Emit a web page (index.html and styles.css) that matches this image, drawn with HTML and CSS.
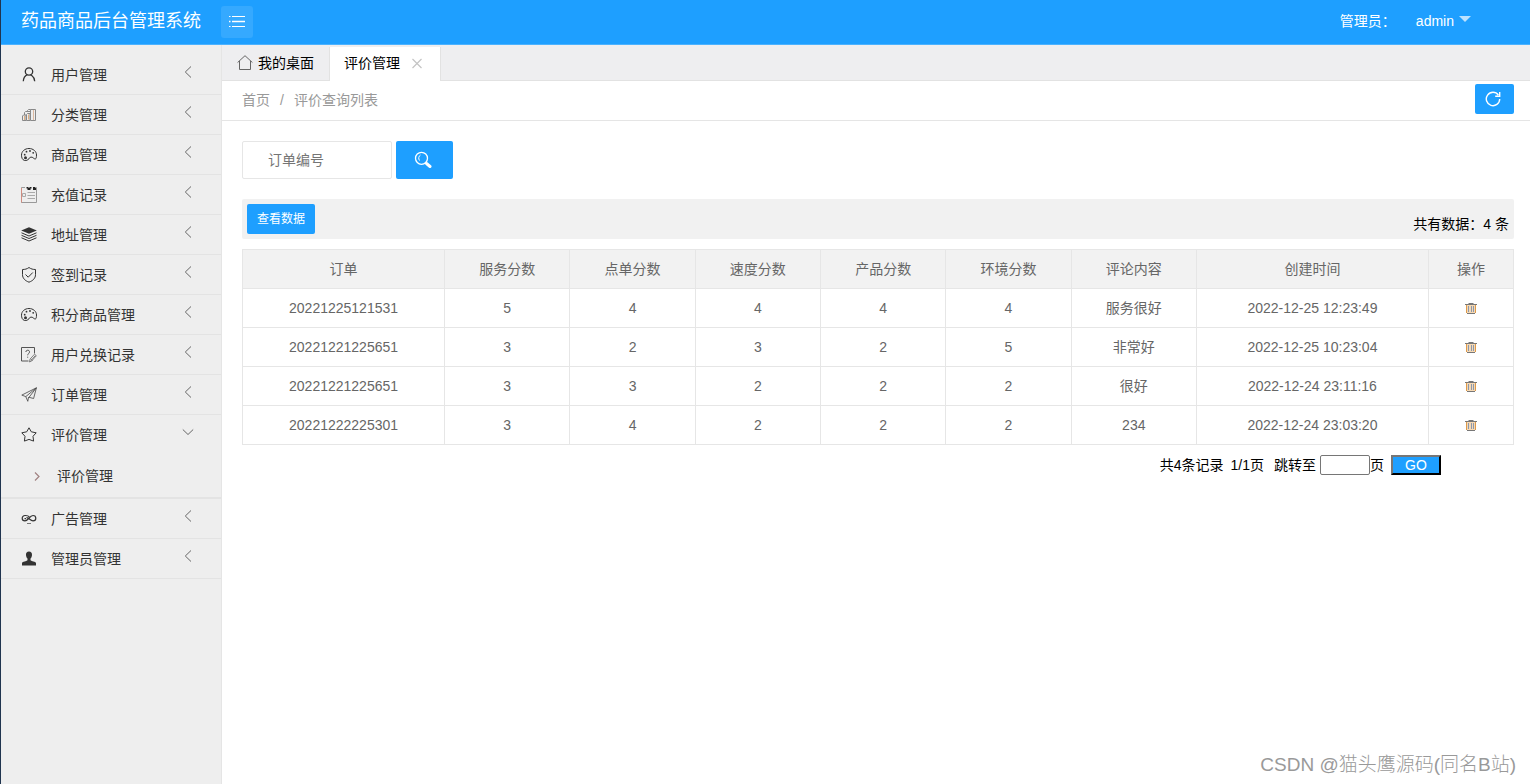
FILE: index.html
```html
<!DOCTYPE html>
<html lang="zh-CN">
<head>
<meta charset="utf-8">
<title>药品商品后台管理系统</title>
<link rel="stylesheet" href="styles.css">
</head>
<body>
<svg class="sprite" aria-hidden="true">
  <symbol id="user" viewBox="0 0 16 16"><g stroke-width="1.3"><circle cx="8" cy="4.500" r="3.700"/><path d="M6.300 7.700C4 8.800 2.500 11 2.300 14.200M9.500 7.700l1.500 1C12.800 10 13.600 11.800 13.700 14.200"/></g></symbol>
  <symbol id="chart" viewBox="0 0 16 16"><path d="M1.500 13.500V9l1-1H5v5.500zM5.500 13.500v-6l1-1H9v7zM9.500 13.500v-11h5v11zM3.500 8V5.500l1-1h5M6.500 4.500v-1l1-1h2" stroke="#888"/><path d="M7.500 7.500v5M3.500 9v4" stroke="#e0b083"/><path d="M12.500 3v10" stroke="#dcb9a0"/></symbol>
  <symbol id="palette" viewBox="0 0 16 16"><path d="M3.300 13.400C1.300 12.700.5 10.500.5 8.200.5 4.200 3.900 1.500 8 1.500s7.500 2.800 7.500 6.500c0 2.200-.3 3.800-1.200 4-1.500.2-2.400-2.300-4.400-1.900-2.500.5-1.900 3.300-4.800 3.400-.7 0-1.200.1-1.800-.1z"/><g fill="#333" stroke="none"><circle cx="3.700" cy="7.700" r=".9"/><circle cx="5.500" cy="4.700" r=".9"/><circle cx="9" cy="4" r=".9"/><circle cx="12.200" cy="5.800" r=".9"/><circle cx="4.500" cy="10.800" r="1.500"/></g></symbol>
  <symbol id="note" viewBox="0 0 16 16"><path d="M4 .5H.5v15h15V.5H14" stroke="#999"/><path d="M.5 1v14.500" stroke="#d08c80"/><path d="M6.500 5.500h7.500M6.500 8.500h7.500M6.500 11.500h7.500M1.500 6.500h3v3h-3z" stroke="#aaa"/><path d="M5.500 .5h2M8.500 .5h2M12 .5h2M6.500 2h3M12 2h3" stroke="#222" stroke-width="1.800"/></symbol>
  <symbol id="layers" viewBox="0 0 16 16"><path d="M8 .3l7.800 3.200L8 6.800.2 3.500z" fill="#333" stroke="none"/><path d="M.5 5.800L8 9l7.500-3.200M.5 8.300L8 11.500l7.500-3.200M.5 10.800L8 14l7.500-3.200"/></symbol>
  <symbol id="shield" viewBox="0 0 16 16"><path d="M8 .5c2 1.500 4 2 6.500 2v5.200c0 3.500-2.500 6-6.500 7.500-4-1.500-6.500-4-6.500-7.500V2.500C4 2.500 6 2 8 .5zM4.500 7.500l2.700 2.700L11.800 5.500"/></symbol>
  <symbol id="form" viewBox="0 0 16 16"><path d="M13.500 6.500V.5H.5v13.500h7M4.800 5c.2-2.500 4-2.300 3.700 0C8.400 6.500 6.800 6.500 6.700 8.300M6.700 9.700v1" stroke="#555"/><path d="M8.500 15l.5-2.800 4.500-5 1.800 1.500-4.500 5.200zM10 13.500l4.200-4.800M9.500 12l2 1.500" stroke="#666" stroke-width=".8"/></symbol>
  <symbol id="plane" viewBox="0 0 16 16"><path d="M15.400.8L.8 8.100l4 1.500L15.400.8 12.600 11.500l-4.600-1.200L15.400.8M4.800 9.600l2 4.700.8-4.300" stroke="#444" stroke-width=".8"/></symbol>
  <symbol id="star" viewBox="0 0 16 16"><path d="M8 .8l2.300 4 4.900 1-3.200 3.500.6 4.800L8 12.400l-4.600 1.700.6-4.800L.8 5.800l4.900-1z"/></symbol>
  <symbol id="loop" viewBox="0 0 16 16"><path d="M8.300 5.800C7 4.300 5.300 4.500 4 4.500 2.300 4.500 1.200 5.700 1.200 7.300S2.400 9.900 4 9.900c3.300 0 4.500-5.400 8-5.400 1.700 0 2.800 1.200 2.800 2.800S13.600 9.900 12 9.900c-2.800 0-3.800-3.400-6.500-3.200M3.500 7.600h1.500" stroke-width="1.200"/><path d="M6 12.500h4" stroke="#777"/></symbol>
  <symbol id="admin" viewBox="0 0 16 16"><path d="M8 .5c2 0 3.200 1.300 3 3.500-.1 1.500-.6 2.800-1.500 3.600v1.600c1 1 5 1.200 5.500 2.800v2.500H1V12c.5-1.600 4.500-1.800 5.500-2.800V7.600C5.600 6.800 5.100 5.500 5 4 4.800 1.800 6 .5 8 .5z" fill="#333" stroke="none"/></symbol>
  <symbol id="left" viewBox="0 0 16 16"><path d="M11 2.500L5.300 8l5.700 5.500"/></symbol>
  <symbol id="down" viewBox="0 0 16 16"><path d="M2.800 4.500l5.200 5L13.200 4.500"/></symbol>
  <symbol id="right" viewBox="0 0 16 16"><path d="M6 4.500l4 4-4 4" stroke-width="1.200"/></symbol>
  <symbol id="home" viewBox="0 0 16 16"><path d="M.6 7.500L8 .7l7.400 6.800M2.500 6v8.500h11V6"/></symbol>
  <symbol id="close" viewBox="0 0 14 14"><path d="M2.500 3l9 9M11.500 3l-9 9" stroke-width="1.200"/></symbol>
  <symbol id="refresh" viewBox="0 0 16 16"><path d="M13.400 4A6.700 6.700 0 1 0 14.700 8M14.700 1v4.300h-4.500" stroke-width="1.400"/></symbol>
  <symbol id="search" viewBox="0 0 18 18"><circle cx="7.500" cy="7.300" r="6" stroke-width="1.300"/><path d="M6.500 4c-2 1.200-2.300 3.700-1 5.500"/><path d="M12.500 12.500l3.500 3" stroke-width="3" stroke-linecap="round"/></symbol>
  <symbol id="list" viewBox="0 0 18 16"><path d="M4 2.500h13M1 2.500h1.500M1 12.500h1.500M4 12.500h13"/><path d="M4 7.500h13M1 7.500h1.500" stroke-width="1.600"/></symbol>
  <symbol id="trash" viewBox="0 0 14 14"><path d="M2 4h10v8H2z" fill="#f6d9b4" stroke="none"/><path d="M1 3.500h12M4.500 2.500h5M3 12.500h8" stroke="#777"/><path d="M2.500 4v8M11.500 4v8" stroke="#dc9a4c"/><path d="M4.500 5v6M7.500 5v6M9.500 5v6" stroke="#8c98ac"/></symbol>
</svg>
<div class="app">
  <header class="header">
    <a class="brand" href="#">药品商品后台管理系统</a>
    <button class="toggle" type="button" aria-label="折叠菜单"><svg class="icon-list"><use href="#list"/></svg></button>
    <div class="account"><span>管理员：</span><a class="account-name" href="#">admin<i class="caret"></i></a></div>
  </header>
  <div class="body">
    <nav class="sidebar">
      <a class="item" href="#"><svg class="icon"><use href="#user"/></svg><span>用户管理</span><svg class="icon arrow"><use href="#left"/></svg></a>
      <a class="item" href="#"><svg class="icon"><use href="#chart"/></svg><span>分类管理</span><svg class="icon arrow"><use href="#left"/></svg></a>
      <a class="item" href="#"><svg class="icon"><use href="#palette"/></svg><span>商品管理</span><svg class="icon arrow"><use href="#left"/></svg></a>
      <a class="item" href="#"><svg class="icon"><use href="#note"/></svg><span>充值记录</span><svg class="icon arrow"><use href="#left"/></svg></a>
      <a class="item" href="#"><svg class="icon"><use href="#layers"/></svg><span>地址管理</span><svg class="icon arrow"><use href="#left"/></svg></a>
      <a class="item" href="#"><svg class="icon"><use href="#shield"/></svg><span>签到记录</span><svg class="icon arrow"><use href="#left"/></svg></a>
      <a class="item" href="#"><svg class="icon"><use href="#palette"/></svg><span>积分商品管理</span><svg class="icon arrow"><use href="#left"/></svg></a>
      <a class="item" href="#"><svg class="icon"><use href="#form"/></svg><span>用户兑换记录</span><svg class="icon arrow"><use href="#left"/></svg></a>
      <a class="item" href="#"><svg class="icon"><use href="#plane"/></svg><span>订单管理</span><svg class="icon arrow"><use href="#left"/></svg></a>
      <div class="group">
        <a class="item item-open" href="#"><svg class="icon"><use href="#star"/></svg><span>评价管理</span><svg class="icon arrow"><use href="#down"/></svg></a>
        <a class="subitem" href="#"><svg class="icon"><use href="#right"/></svg><span>评价管理</span></a>
      </div>
      <a class="item" href="#"><svg class="icon"><use href="#loop"/></svg><span>广告管理</span><svg class="icon arrow"><use href="#left"/></svg></a>
      <a class="item" href="#"><svg class="icon"><use href="#admin"/></svg><span>管理员管理</span><svg class="icon arrow"><use href="#left"/></svg></a>
    </nav>
    <main class="main">
      <div class="tabs">
        <a class="tab" href="#"><svg class="icon"><use href="#home"/></svg>我的桌面</a>
        <div class="tab tab-active"><a href="#">评价管理</a><button class="tab-close" type="button" aria-label="关闭"><svg class="icon-small"><use href="#close"/></svg></button></div>
      </div>
      <div class="crumbs">
        <a href="#">首页</a><span>/</span><a href="#">评价查询列表</a>
        <button class="btn refresh" type="button" aria-label="刷新"><svg class="icon"><use href="#refresh"/></svg></button>
      </div>
      <section class="content">
        <form class="search">
          <input class="search-input" type="text" placeholder="订单编号" aria-label="订单编号">
          <button class="btn search-btn" type="button" aria-label="搜索"><svg class="icon-search"><use href="#search"/></svg></button>
        </form>
        <div class="toolbar">
          <button class="btn view" type="button">查看数据</button>
          <span class="total">共有数据：4 条</span>
        </div>
        <table class="table">
          <colgroup><col class="c-order"><col class="c-score" span="6"><col class="c-time"><col class="c-action"></colgroup>
          <thead><tr><th>订单</th><th>服务分数</th><th>点单分数</th><th>速度分数</th><th>产品分数</th><th>环境分数</th><th>评论内容</th><th>创建时间</th><th>操作</th></tr></thead>
          <tbody>
            <tr><td>20221225121531</td><td>5</td><td>4</td><td>4</td><td>4</td><td>4</td><td>服务很好</td><td>2022-12-25 12:23:49</td><td><button class="delete" type="button" aria-label="删除"><svg class="icon-small"><use href="#trash"/></svg></button></td></tr>
            <tr><td>20221221225651</td><td>3</td><td>2</td><td>3</td><td>2</td><td>5</td><td>非常好</td><td>2022-12-25 10:23:04</td><td><button class="delete" type="button" aria-label="删除"><svg class="icon-small"><use href="#trash"/></svg></button></td></tr>
            <tr><td>20221221225651</td><td>3</td><td>3</td><td>2</td><td>2</td><td>2</td><td>很好</td><td>2022-12-24 23:11:16</td><td><button class="delete" type="button" aria-label="删除"><svg class="icon-small"><use href="#trash"/></svg></button></td></tr>
            <tr><td>20221222225301</td><td>3</td><td>4</td><td>2</td><td>2</td><td>2</td><td>234</td><td>2022-12-24 23:03:20</td><td><button class="delete" type="button" aria-label="删除"><svg class="icon-small"><use href="#trash"/></svg></button></td></tr>
          </tbody>
        </table>
        <form class="pager">
          <span>共4条记录</span><span>1/1页</span>
          <span class="jump"><label for="page">跳转至</label><input id="page" class="page" type="text"><span>页</span></span>
          <button class="go" type="button">GO</button>
        </form>
      </section>
    </main>
  </div>
  <div class="watermark">CSDN @猫头鹰源码(同名B站)</div>
</div>
</body>
</html>
```
FILE: styles.css
```css
* { box-sizing: border-box; }
body { margin: 0; background: #fff; color: #000; font: 14px/20px "Liberation Sans", "Noto Sans CJK SC", sans-serif; }
a { color: inherit; text-decoration: none; }
button, input { font: inherit; }
button { cursor: pointer; }
svg { display: block; fill: none; stroke: currentColor; stroke-width: 1; }
.sprite { position: absolute; width: 0; height: 0; }
.icon { width: 16px; height: 16px; flex: none; }
.icon-small { width: 14px; height: 14px; }
.icon-list { width: 18px; height: 16px; }
.icon-search { width: 18px; height: 18px; }

.app { position: relative; display: flex; flex-direction: column; min-height: 100vh; border-left: 1px solid #20344f; }
.header { display: flex; align-items: flex-start; height: 45px; padding: 6px 59px 0 20px; background: #1e9fff; border-bottom: 1px solid #4bb2ff; color: #fff; }
.brand { width: 200px; font-size: 18px; line-height: 30px; }
.toggle { display: grid; place-items: center; width: 32px; height: 32px; padding: 0; border: 0; border-radius: 3px; background: #35a9ff; color: #fff; }
.account { display: flex; gap: 20px; margin-left: auto; line-height: 30px; }
.account-name { display: flex; gap: 5px; }
.caret { width: 0; height: 0; margin-top: 10px; border: 6px solid transparent; border-top-color: #bce2ff; border-bottom: 0; }

.body { display: flex; flex: 1; }
.sidebar { flex: none; width: 221px; padding-top: 10px; background: #eee; border-right: 1px solid #e5e5e5; color: #333; }
.item { display: flex; align-items: center; gap: 14px; height: 40px; padding: 0 25px 0 20px; border-bottom: 1px solid #e3e3e3; }
.arrow { margin: 0 0 5px auto; color: #666; }
.item-open { border-bottom: 0; }
.group { border-bottom: 2px solid #e3e3e3; }
.subitem { display: flex; align-items: center; gap: 12px; height: 42px; padding-left: 28px; }
.subitem .icon { color: #a08080; }

.main { flex: 1; min-width: 0; }
.tabs { display: flex; align-items: flex-end; height: 36px; background: #eeeef0; border-bottom: 1px solid #e2e2e2; }
.tab { display: flex; align-items: center; gap: 5px; height: 34px; padding: 0 15px; }
.tab .icon { color: #666; }
.tab-active { gap: 10px; height: 34px; margin-bottom: -1px; padding: 0 16px 2px 14px; background: #fff; border-left: 1px solid #e2e2e2; border-right: 1px solid #e2e2e2; }
.tab-close { padding: 0; border: 0; background: none; color: #c4c4c4; }
.crumbs { display: flex; align-items: center; gap: 10px; height: 40px; padding: 0 16px 2px 20px; border-bottom: 1px solid #e5e5e5; color: #999; }
.btn { display: grid; place-items: center; padding: 0; border: 0; border-radius: 2px; background: #1e9fff; color: #fff; }
.refresh { width: 39px; height: 30px; margin: 0 0 2px auto; padding-right: 3px; }
.content { padding: 20px 16px 20px 20px; }
.search { display: flex; gap: 4px; margin-bottom: 20px; }
.search-input { width: 150px; height: 38px; padding: 0 25px; border: 1px solid #e6e6e6; border-radius: 2px; outline: 0; }
.search-input::placeholder { color: #757575; }
.search-btn { width: 57px; height: 38px; padding-right: 3px; }
.toolbar { display: flex; justify-content: space-between; height: 40px; margin-bottom: 10px; padding: 5px; background: #f1f1f1; border-radius: 2px; }
.view { width: 68px; height: 30px; font-size: 12px; }
.total { line-height: 40px; }
.table { width: 100%; table-layout: fixed; border-collapse: collapse; color: #666; text-align: center; }
.c-order { width: 15.9%; }
.c-score { width: 9.86%; }
.c-time { width: 18.25%; }
.c-action { width: 6.69%; }
.table th, .table td { height: 39px; padding: 0; border: 1px solid #e6e6e6; font-weight: 400; }
.table th { background: #f2f2f2; }
.delete { display: block; margin: 0 auto; padding: 0; border: 0; background: none; }
.pager { display: flex; justify-content: flex-end; gap: 7px; margin-top: 10px; padding-right: 73px; }
.jump { display: flex; margin-left: 3px; }
.page { width: 50px; height: 20px; margin-left: 4px; padding: 0 2px; border: 1px solid #767676; border-radius: 2px; }
.go { width: 50px; height: 20px; padding: 0; border: 2px outset #767676; border-color: #767676 #212121 #212121 #767676; background: #1e9fff; color: #fff; line-height: 16px; }
.watermark { position: absolute; right: 14px; bottom: 5px; color: #999; font-size: 19px; font-weight: 300; line-height: 28px; }
```
